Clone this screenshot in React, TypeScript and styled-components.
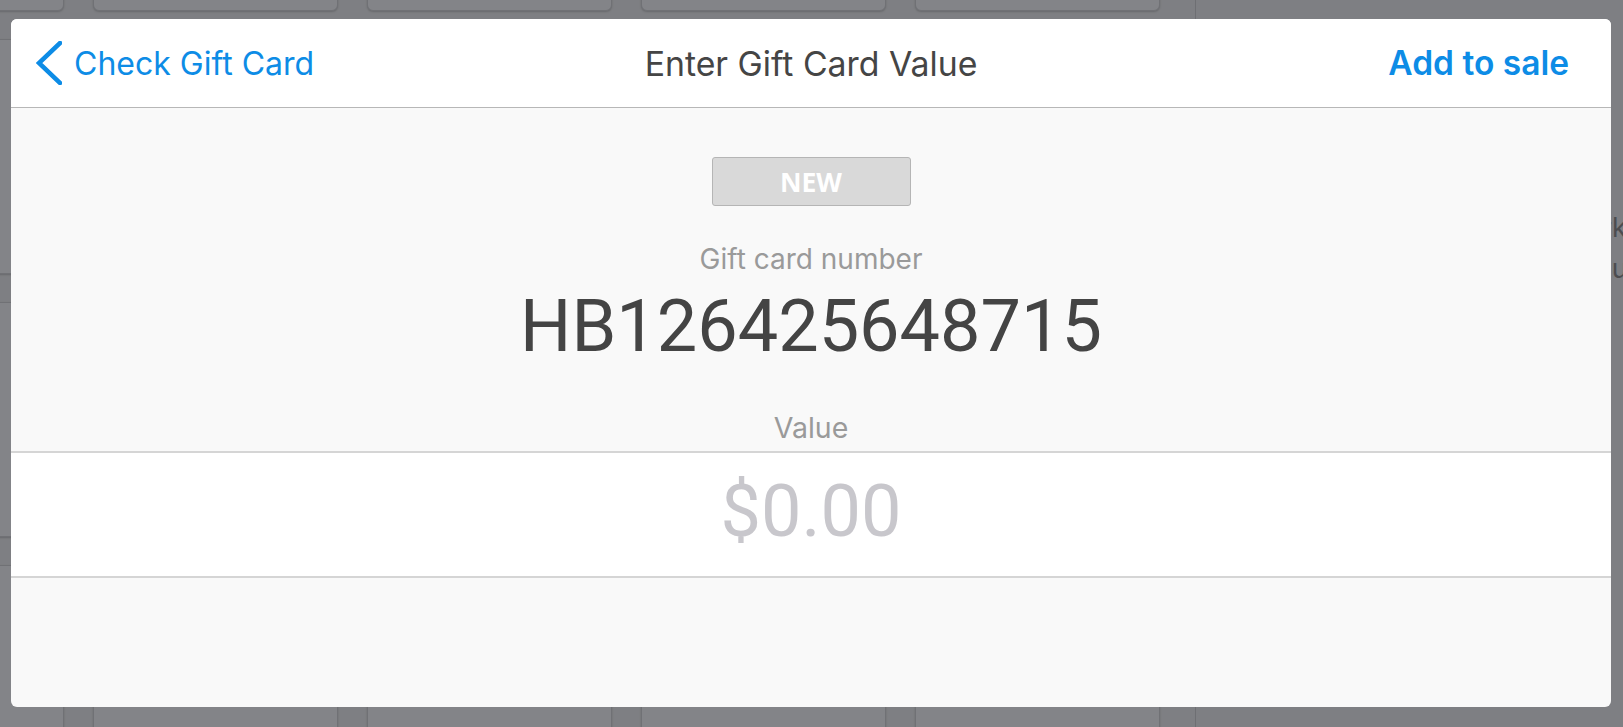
import React from "react";
import styled, { createGlobalStyle } from "styled-components";

const GlobalStyle = createGlobalStyle`
  html, body {
    margin: 0;
    padding: 0;
    background: #7e7f83;
    overflow: hidden;
  }
  * { box-sizing: border-box; }
`;

const Screen = styled.div`
  position: relative;
  width: 1623px;
  height: 727px;
  overflow: hidden;
  background: #7e7f83;
`;

const Backdrop = styled.div`
  display: flex;
  height: 100%;
`;

const TileGrid = styled.div`
  display: grid;
  grid-template-columns: repeat(5, 245px);
  grid-auto-rows: 235px;
  column-gap: 29px;
  row-gap: 28px;
  margin-left: -181px;
  margin-top: -224px;
  flex: none;
`;

const Tile = styled.div`
  background: #838488;
  border: 1px solid #707175;
  border-radius: 6px;
  box-shadow: 0 1px 2px rgba(0, 0, 0, 0.18);
`;

const Sidebar = styled.div`
  flex: 1;
  min-width: 0;
  margin-left: 35px;
  border-left: 1px solid #6e6f73;
  padding-top: 211px;
  display: flex;
  flex-direction: column;
  gap: 8px;
  font-family: "Inter", "Liberation Sans", sans-serif;
  font-size: 27px;
  color: #4c4d50;
  white-space: nowrap;
  overflow: hidden;
`;

const SideLine = styled.div<{ $indent: number }>`
  padding-left: ${(p) => p.$indent}px;
`;

const Modal = styled.div`
  position: absolute;
  left: 11px;
  top: 19px;
  width: 1600px;
  height: 688px;
  border-radius: 6px;
  overflow: hidden;
  background: #f9f9f9;
  display: flex;
  flex-direction: column;
`;

const Header = styled.header`
  height: 89px;
  flex: none;
  background: #ffffff;
  border-bottom: 1px solid #b7b7b7;
  display: grid;
  grid-template-columns: 1fr auto 1fr;
  align-items: center;
  font-family: "Inter", "Liberation Sans", sans-serif;
`;

const BackButton = styled.button`
  justify-self: start;
  display: flex;
  align-items: center;
  gap: 12px;
  padding: 0 0 0 25px;
  background: none;
  border: none;
  color: #0d8ce6;
  font-family: inherit;
  font-size: 32px;
  font-weight: 400;
  cursor: pointer;
`;

const Title = styled.h1`
  margin: 0;
  font-size: 33.8px;
  font-weight: 400;
  color: #454545;
`;

const ActionButton = styled.button`
  justify-self: end;
  padding: 0 42px 0 0;
  background: none;
  border: none;
  color: #0d8ce6;
  font-family: inherit;
  font-size: 33.5px;
  font-weight: 600;
  cursor: pointer;
`;

const Body = styled.main`
  flex: 1;
  display: flex;
  flex-direction: column;
  align-items: center;
`;

const Badge = styled.div`
  margin-top: 49px;
  width: 199px;
  height: 49px;
  display: flex;
  align-items: center;
  justify-content: center;
  background: #d9d9d9;
  border: 1px solid #b5b5b5;
  border-radius: 3px;
  color: #ffffff;
  font-family: "Open Sans", "Liberation Sans", sans-serif;
  font-weight: 700;
  font-size: 26.5px;
`;

const Label = styled.div<{ $top: number; $size: number }>`
  margin-top: ${(p) => p.$top}px;
  font-family: "Inter", "Liberation Sans", sans-serif;
  font-size: ${(p) => p.$size}px;
  line-height: 30px;
  color: #9a9a9a;
`;

const CardNumber = styled.div`
  margin-top: 12px;
  font-family: "Roboto", "Liberation Sans", sans-serif;
  font-size: 72px;
  line-height: 82px;
  color: #444444;
`;

const ValueField = styled.div`
  align-self: stretch;
  margin-top: 8px;
  height: 127px;
  background: #ffffff;
  border-top: 2px solid #d5d5d5;
  border-bottom: 2px solid #d5d5d5;
  display: flex;
  align-items: center;
  justify-content: center;
`;

const ValueInput = styled.input`
  width: 100%;
  border: none;
  outline: none;
  background: transparent;
  text-align: center;
  font-family: "Roboto", "Liberation Sans", sans-serif;
  font-size: 72px;
  line-height: 82px;
  margin-top: -6px;
  color: #444444;
  &::placeholder {
    color: #c8c7cc;
  }
`;

const Chevron = () => (
  <svg width="26" height="44" viewBox="0 0 26 44" fill="none">
    <path d="M24 2 L3 22 L24 42" stroke="#0d8ce6" strokeWidth="4.5" strokeLinecap="square" />
  </svg>
);

export default function App() {
  const tiles = Array.from({ length: 20 });
  return (
    <>
      <GlobalStyle />
      <Screen>
        <Backdrop>
          <TileGrid>
            {tiles.map((_, i) => (
              <Tile key={i} />
            ))}
          </TileGrid>
          <Sidebar>
            <SideLine $indent={373}>Park</SideLine>
            <SideLine $indent={396}>Cu</SideLine>
          </Sidebar>
        </Backdrop>
        <Modal>
          <Header>
            <BackButton>
              <Chevron />
              Check Gift Card
            </BackButton>
            <Title>Enter Gift Card Value</Title>
            <ActionButton>Add to sale</ActionButton>
          </Header>
          <Body>
            <Badge>NEW</Badge>
            <Label $top={38} $size={28}>Gift card number</Label>
            <CardNumber>HB126425648715</CardNumber>
            <Label $top={45} $size={28.5}>Value</Label>
            <ValueField>
              <ValueInput placeholder="$0.00" readOnly />
            </ValueField>
          </Body>
        </Modal>
      </Screen>
    </>
  );
}
